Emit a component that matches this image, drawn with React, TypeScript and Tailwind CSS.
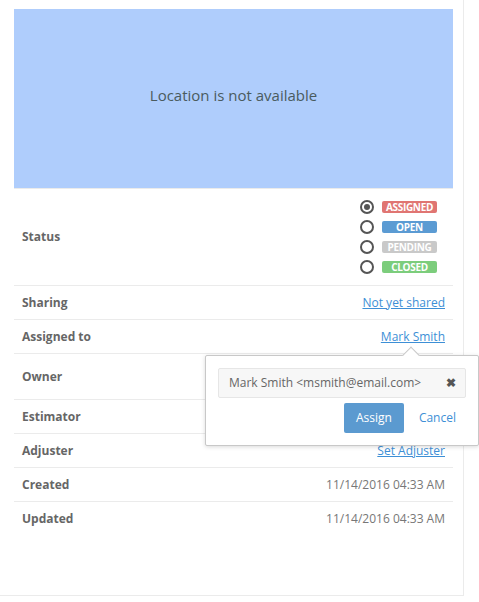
import React from "react";

const statuses = [
  { label: "ASSIGNED", color: "bg-[#e07572]", checked: true },
  { label: "OPEN", color: "bg-[#5b9bd3]", checked: false },
  { label: "PENDING", color: "bg-[#c9c9c9]", checked: false },
  { label: "CLOSED", color: "bg-[#7ccd7c]", checked: false },
];

function Radio({ checked }: { checked: boolean }) {
  return (
    <span className="flex h-[14px] w-[14px] items-center justify-center rounded-full border-2 border-[#555]">
      {checked && <span className="h-[6px] w-[6px] rounded-full bg-[#555]" />}
    </span>
  );
}

function Row({
  label,
  children,
  className = "h-[34px]",
}: {
  label: string;
  children?: React.ReactNode;
  className?: string;
}) {
  return (
    <div className={`relative flex items-center justify-between border-t border-[#ebebeb] px-2 ${className}`}>
      <span className="text-[12px] font-bold text-[#666]">{label}</span>
      {children}
    </div>
  );
}

function Link({ children }: { children: React.ReactNode }) {
  return <a className="cursor-pointer text-[12px] text-[#3d8fd6] underline">{children}</a>;
}

function AssignPopover() {
  return (
    <div className="absolute left-[191px] top-[35px] z-10 w-[274px] rounded-[2px] border border-[#c8c8c8] bg-white p-3 shadow-[0_1px_4px_rgba(0,0,0,0.15)]">
      <span className="absolute left-[199px] top-[-7px] h-3 w-3 rotate-45 border-l border-t border-[#c8c8c8] bg-white" />
      <div className="flex h-[30px] items-center justify-between rounded-[2px] border border-[#e6e6e6] bg-[#f7f7f7] pl-[10px] pr-[9px]">
        <span className="text-[12px] text-[#666]">Mark Smith &lt;msmith@email.com&gt;</span>
        <span className="text-[12px] font-bold leading-none text-[#555]">✖</span>
      </div>
      <div className="mt-[5px] flex items-center justify-end gap-[15px] pr-[10px]">
        <button className="h-[30px] w-[60px] rounded-[2px] bg-[#5b9ad0] text-[12px] text-white">Assign</button>
        <a className="cursor-pointer text-[12px] text-[#3d8fd6]">Cancel</a>
      </div>
    </div>
  );
}

export default function App() {
  return (
    <div className="h-[602px] w-[479px] bg-white font-['Open_Sans',sans-serif]">
      <div className="h-[596px] w-[464px] border-b border-r border-[#ebebeb] pl-[14px] pr-[10px] pt-[9px]">
        <div className="flex h-[179px] items-center justify-center bg-[#afcdfc] pb-[6px]">
          <span className="text-[15px] text-[#4a5b5e]">Location is not available</span>
        </div>
        <Row label="Status" className="h-[97px]">
          <div className="flex flex-col pr-2">
            {statuses.map((s) => (
              <div key={s.label} className="flex h-[20px] items-center gap-[8px]">
                <Radio checked={s.checked} />
                <span
                  className={`flex h-[12px] w-[55px] items-center justify-center rounded-[2px] text-[10px] font-bold leading-none tracking-[-0.3px] text-white ${s.color}`}
                >
                  {s.label}
                </span>
              </div>
            ))}
          </div>
        </Row>
        <Row label="Sharing">
          <Link>Not yet shared</Link>
        </Row>
        <Row label="Assigned to">
          <Link>Mark Smith</Link>
          <AssignPopover />
        </Row>
        <Row label="Owner" className="h-[46px]" />
        <Row label="Estimator" />
        <Row label="Adjuster">
          <Link>Set Adjuster</Link>
        </Row>
        <Row label="Created">
          <span className="text-[12px] text-[#777]">11/14/2016 04:33 AM</span>
        </Row>
        <Row label="Updated">
          <span className="text-[12px] text-[#777]">11/14/2016 04:33 AM</span>
        </Row>
      </div>
    </div>
  );
}
